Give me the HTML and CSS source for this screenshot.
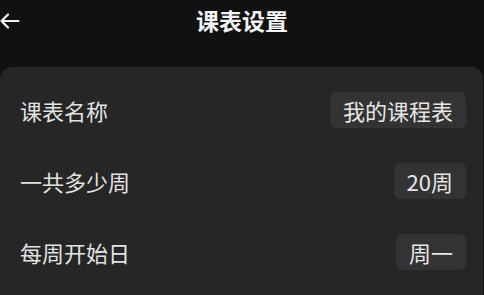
FILE: index.html
```html
<!DOCTYPE html>
<html lang="zh">
<head>
<meta charset="utf-8">
<link rel="stylesheet" href="styles.css">
</head>
<body>
<header class="topbar">
  <div class="back">
    <svg width="20" height="16" viewBox="0 0 20 16" fill="none" stroke="#f2f2f2" stroke-width="2.2" stroke-linecap="round" stroke-linejoin="round">
      <path d="M18.5 8H1.5M8 1.5L1.5 8L8 14.5"/>
    </svg>
  </div>
  <h1 class="title">课表设置</h1>
  <div class="spacer"></div>
</header>
<main class="card">
  <div class="row">
    <span class="label">课表名称</span>
    <span class="pill">我的课程表</span>
  </div>
  <div class="row">
    <span class="label">一共多少周</span>
    <span class="pill">20周</span>
  </div>
  <div class="row">
    <span class="label">每周开始日</span>
    <span class="pill">周一</span>
  </div>
</main>
</body>
</html>
```
FILE: styles.css
```css
html, body {
  margin: 0;
  padding: 0;
  background: #111111;
  font-family: "Noto Sans CJK SC", "Noto Sans", sans-serif;
  height: 100%;
  overflow: hidden;
}
.topbar {
  height: 40px;
  display: grid;
  grid-template-columns: 1fr auto 1fr;
  align-items: center;
}
.back {
  display: flex;
  align-items: center;
  padding-top: 1px;
}
.back svg {
  display: block;
}
.title {
  margin: 0;
  font-size: 23px;
  font-weight: 700;
  color: #f4f4f4;
  line-height: 40px;
}
.card {
  margin-top: 27px;
  margin-right: 1px;
  background: #262626;
  border-radius: 12px 12px 0 0;
  padding: 7px 17px 20px 20px;
}
.row {
  height: 71px;
  display: flex;
  align-items: center;
  justify-content: space-between;
}
.label {
  font-size: 22px;
  color: #e2e2e2;
  line-height: 30px;
}
.pill {
  background: #333333;
  border-radius: 6px;
  height: 36px;
  line-height: 36px;
  padding: 0 13px;
  font-size: 22px;
  color: #e6e6e6;
}
```
